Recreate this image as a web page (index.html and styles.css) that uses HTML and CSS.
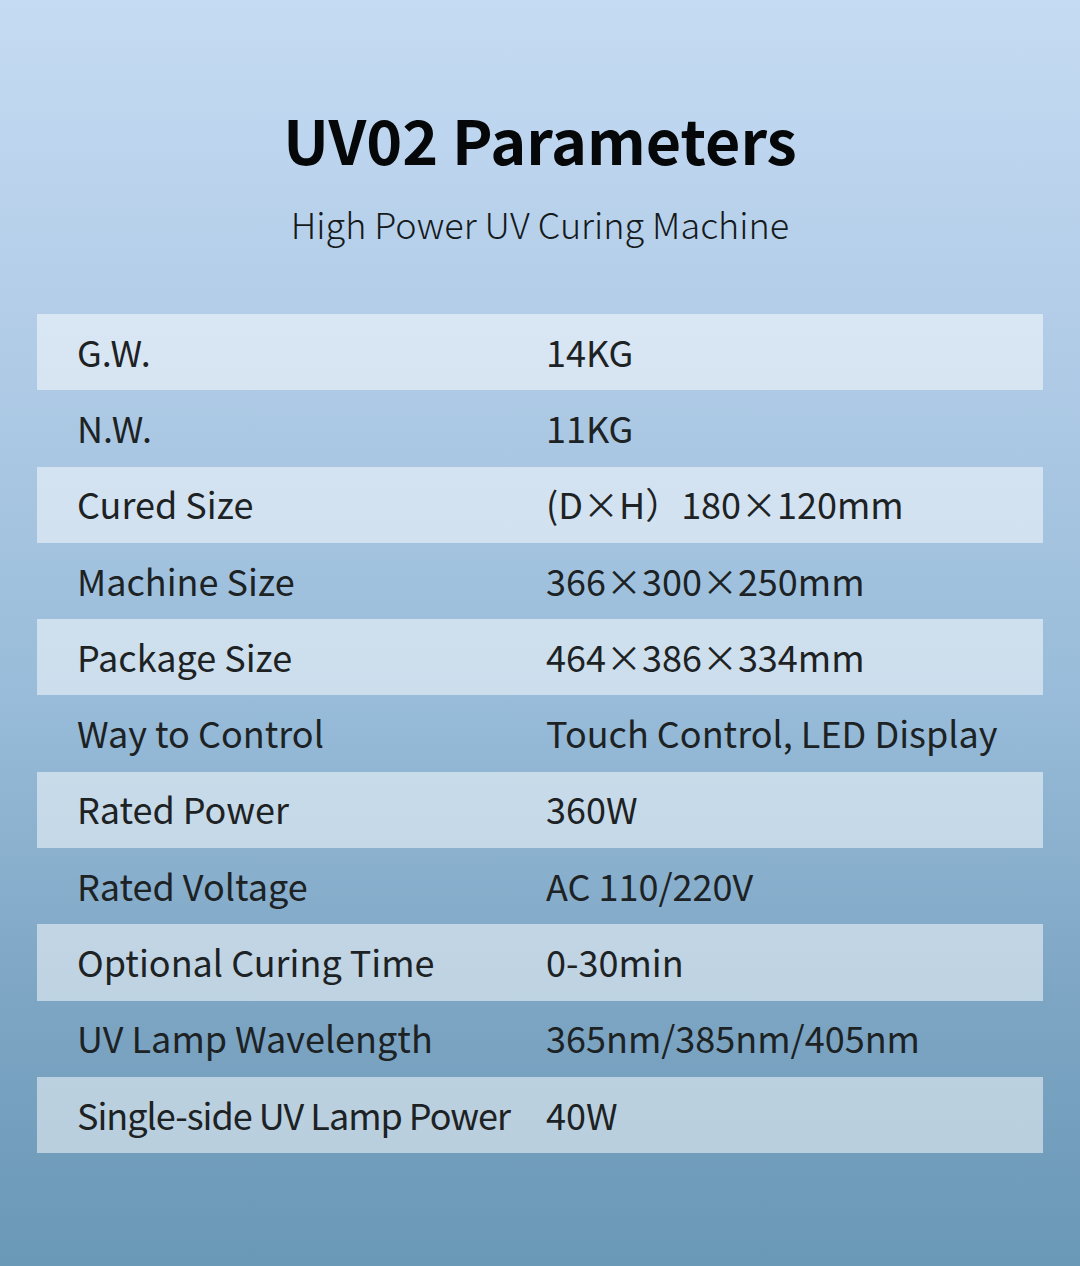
FILE: index.html
```html
<!DOCTYPE html>
<html>
<head>
<meta charset="utf-8">
<link rel="stylesheet" href="styles.css">
</head>
<body>
<div class="page">
  <header class="head">
    <h1 class="title">UV02 Parameters</h1>
    <p class="subtitle">High Power UV Curing Machine</p>
  </header>
  <div class="table">
    <div class="row alt"><span class="label">G.W.</span><span class="value">14KG</span></div>
    <div class="row"><span class="label">N.W.</span><span class="value">11KG</span></div>
    <div class="row alt"><span class="label">Cured Size</span><span class="value">(D×H）180×120mm</span></div>
    <div class="row"><span class="label">Machine Size</span><span class="value">366×300×250mm</span></div>
    <div class="row alt"><span class="label">Package Size</span><span class="value">464×386×334mm</span></div>
    <div class="row"><span class="label">Way to Control</span><span class="value">Touch Control, LED Display</span></div>
    <div class="row alt"><span class="label">Rated Power</span><span class="value">360W</span></div>
    <div class="row"><span class="label">Rated Voltage</span><span class="value">AC 110/220V</span></div>
    <div class="row alt"><span class="label">Optional Curing Time</span><span class="value">0-30min</span></div>
    <div class="row"><span class="label">UV Lamp Wavelength</span><span class="value">365nm/385nm/405nm</span></div>
    <div class="row alt"><span class="label narrow">Single-side UV Lamp Power</span><span class="value">40W</span></div>
  </div>
</div>
</body>
</html>
```
FILE: styles.css
```css
html, body {
  margin: 0;
  padding: 0;
}
body {
  width: 1080px;
  height: 1266px;
  overflow: hidden;
  font-family: "Noto Sans CJK SC", "Noto Sans", sans-serif;
  color: #1d2224;
}
.page {
  height: 1266px;
  background: linear-gradient(180deg, #c5dbf3 0%, #b3cde8 25%, #98bcd9 55%, #7ca5c3 80%, #6a98b7 100%);
  padding-top: 101px;
  box-sizing: border-box;
}
.head {
  text-align: center;
}
.title {
  margin: 0;
  font-size: 61px;
  font-weight: 700;
  line-height: 76px;
  color: #060708;
}
.subtitle {
  margin: 21px 0 0;
  font-size: 36px;
  font-weight: 300;
  line-height: 50px;
  color: #151a1c;
}
.table {
  margin: 66px 37px 0;
  display: flex;
  flex-direction: column;
}
.row {
  height: 76.3px;
  box-sizing: border-box;
  padding-bottom: 3px;
  display: flex;
  align-items: center;
  font-size: 36px;
  line-height: 42px;
}
.row.alt {
  background: rgba(255, 255, 255, 0.5);
}
.label {
  width: 509px;
  padding-left: 40px;
  box-sizing: border-box;
  flex: none;
  white-space: nowrap;
}
.label.narrow {
  letter-spacing: -1px;
}
.value {
  white-space: nowrap;
}
```
